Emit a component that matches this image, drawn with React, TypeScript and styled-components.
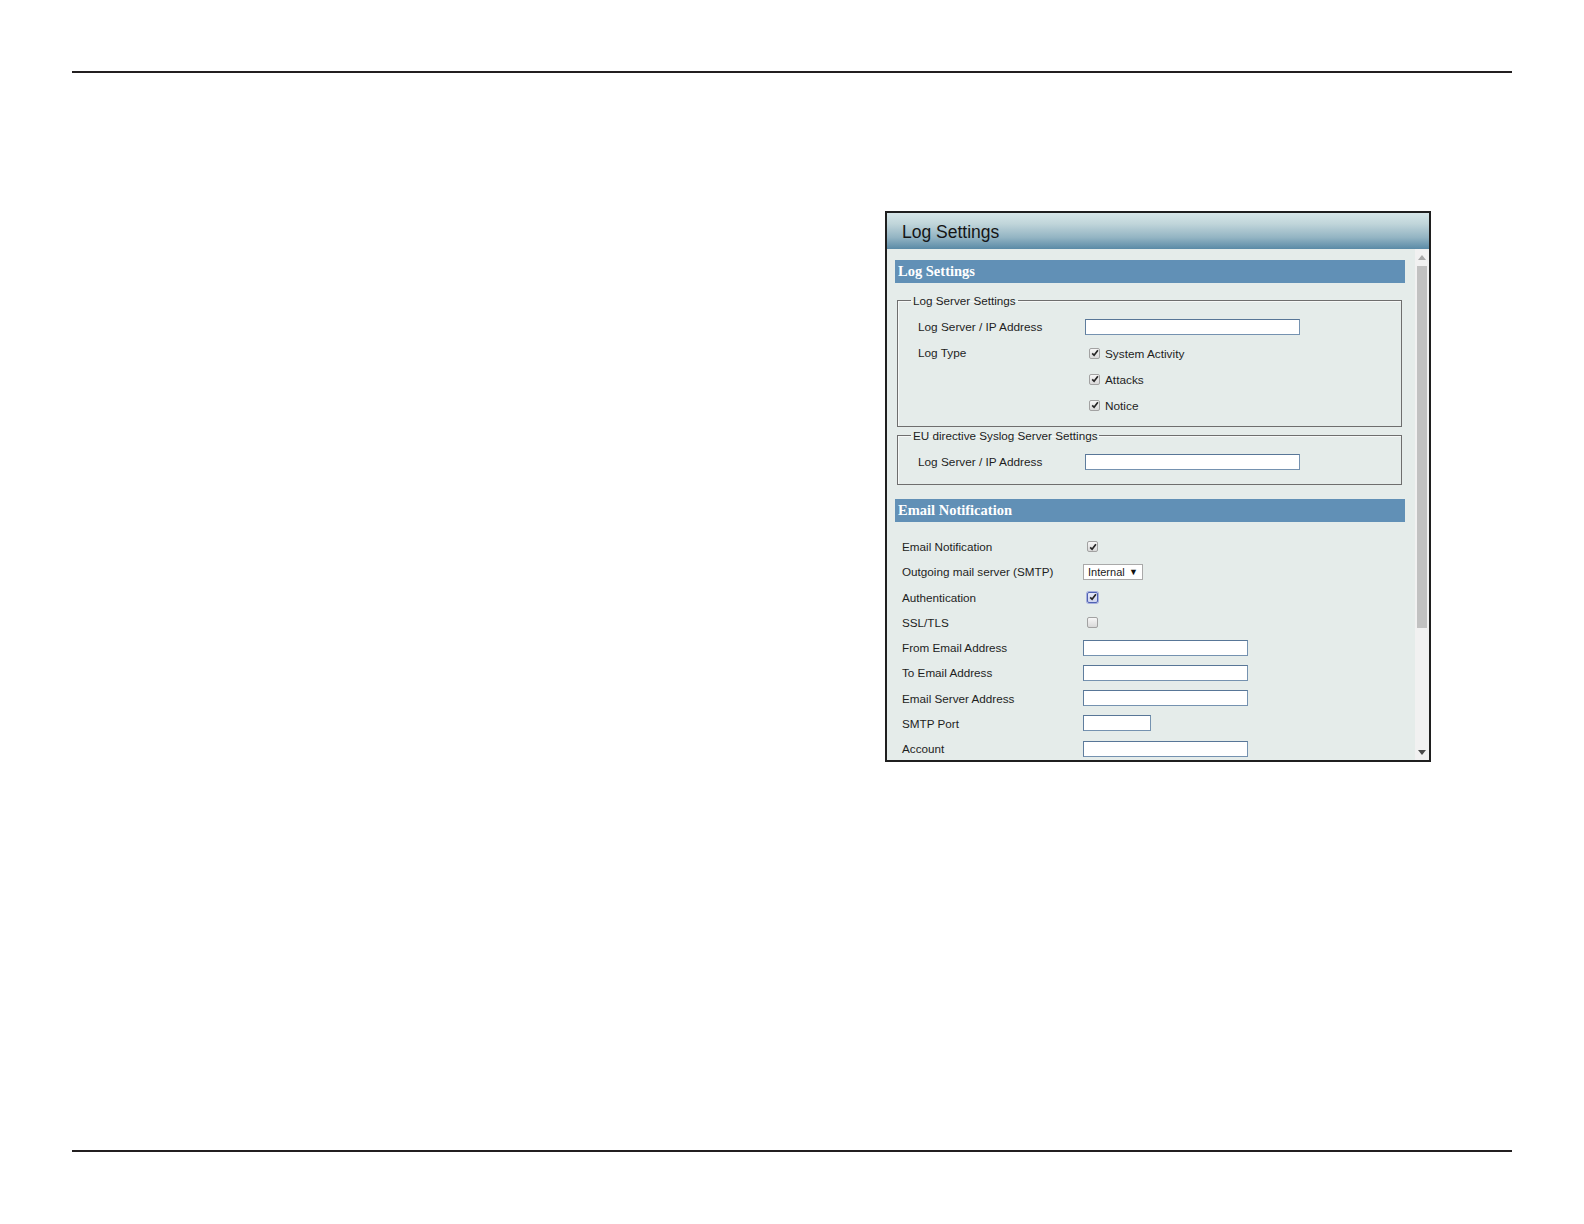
import * as React from 'react';
import styled, { createGlobalStyle } from 'styled-components';

const GlobalStyle = createGlobalStyle`
  body {
    margin: 0;
    background: #ffffff;
    font-family: "Liberation Sans", Arial, sans-serif;
  }
`;

interface CheckboxProps {
  checked?: boolean;
  focused?: boolean;
}

const Checkbox = ({ checked = false, focused = false }: CheckboxProps) => (
  <CheckBox $focused={focused}>
    {checked && (
      <svg width="8" height="8" viewBox="0 0 8 8">
        <path d="M1.2 4.3 L3.1 6.3 L6.9 1.2" fill="none" stroke="#262626" strokeWidth="1.7" />
      </svg>
    )}
  </CheckBox>
);

const Arrow = ({ up, color }: { up?: boolean; color: string }) => (
  <svg width="8" height="5" viewBox="0 0 8 5">
    <path d={up ? 'M0 5 L4 0 L8 5 Z' : 'M0 0 L8 0 L4 5 Z'} fill={color} />
  </svg>
);

const logTypes = ['System Activity', 'Attacks', 'Notice'];

export default function App() {
  return (
    <>
      <GlobalStyle />
      <Page>
        <Rule />
        <Stage>
          <Frame>
            <TitleBar>Log Settings</TitleBar>
            <Body>
              <Content>
                <SectionHeader $top={-1}>Log Settings</SectionHeader>

                <Group $top={11} $bottom={8}>
                  <Legend>Log Server Settings</Legend>
                  <FieldRow>
                    <FieldLabel>Log Server / IP Address</FieldLabel>
                    <Cell>
                      <TextInput $w={215} />
                    </Cell>
                  </FieldRow>
                  <FieldRow>
                    <FieldLabel>Log Type</FieldLabel>
                    <div>
                      {logTypes.map((t) => (
                        <CheckLine key={t}>
                          <Checkbox checked />
                          <CheckText>{t}</CheckText>
                        </CheckLine>
                      ))}
                    </div>
                  </FieldRow>
                </Group>

                <Group $top={2} $bottom={9}>
                  <Legend>EU directive Syslog Server Settings</Legend>
                  <FieldRow>
                    <FieldLabel>Log Server / IP Address</FieldLabel>
                    <Cell>
                      <TextInput $w={215} />
                    </Cell>
                  </FieldRow>
                </Group>

                <SectionHeader $top={14}>Email Notification</SectionHeader>

                <EmailList>
                  <EmailRow>
                    <EmailLabel>Email Notification</EmailLabel>
                    <EmailCheck>
                      <Checkbox checked />
                    </EmailCheck>
                  </EmailRow>
                  <EmailRow>
                    <EmailLabel>Outgoing mail server (SMTP)</EmailLabel>
                    <Select>
                      <span>Internal</span>
                      <SelectArrow>▼</SelectArrow>
                    </Select>
                  </EmailRow>
                  <EmailRow>
                    <EmailLabel>Authentication</EmailLabel>
                    <EmailCheck>
                      <Checkbox checked focused />
                    </EmailCheck>
                  </EmailRow>
                  <EmailRow>
                    <EmailLabel>SSL/TLS</EmailLabel>
                    <EmailCheck>
                      <Checkbox />
                    </EmailCheck>
                  </EmailRow>
                  <EmailRow>
                    <EmailLabel>From Email Address</EmailLabel>
                    <TextInput $w={165} />
                  </EmailRow>
                  <EmailRow>
                    <EmailLabel>To Email Address</EmailLabel>
                    <TextInput $w={165} />
                  </EmailRow>
                  <EmailRow>
                    <EmailLabel>Email Server Address</EmailLabel>
                    <TextInput $w={165} />
                  </EmailRow>
                  <EmailRow>
                    <EmailLabel>SMTP Port</EmailLabel>
                    <TextInput $w={68} />
                  </EmailRow>
                  <EmailRow>
                    <EmailLabel>Account</EmailLabel>
                    <TextInput $w={165} />
                  </EmailRow>
                </EmailList>
              </Content>

              <ScrollTrack>
                <ArrowZone>
                  <Arrow up color="#a8a8a8" />
                </ArrowZone>
                <Thumb />
                <TrackRest />
                <ArrowZone>
                  <Arrow color="#4a4a4a" />
                </ArrowZone>
              </ScrollTrack>
            </Body>
          </Frame>
        </Stage>
        <Rule />
      </Page>
    </>
  );
}

const Page = styled.div`
  width: 1584px;
  padding: 71px 72px 0;
  box-sizing: border-box;
`;

const Rule = styled.div`
  height: 2px;
  background: #231f20;
`;

const Stage = styled.div`
  height: 1077px;
  box-sizing: border-box;
  padding: 138px 0 0 813px;
`;

const Frame = styled.div`
  width: 546px;
  height: 551px;
  box-sizing: border-box;
  border: 2px solid #1f1f1f;
  display: flex;
  flex-direction: column;
`;

const TitleBar = styled.div`
  height: 36px;
  flex-shrink: 0;
  padding-left: 15px;
  line-height: 39px;
  font-size: 17.5px;
  color: #151515;
  background: linear-gradient(#d6e6e8 0%, #c0d5da 30%, #93b4c3 68%, #5a8aa6 100%);
`;

const Body = styled.div`
  flex: 1;
  display: flex;
  min-height: 0;
  overflow: hidden;
`;

const Content = styled.div`
  flex: 1;
  background: #e5ecea;
  padding: 12px 10px 0 8px;
  overflow: hidden;
`;

const SectionHeader = styled.div<{ $top?: number }>`
  margin-top: ${(p) => p.$top ?? 0}px;
  height: 23px;
  line-height: 22px;
  padding-left: 3px;
  background: #6190b6;
  color: #ffffff;
  font-family: "Liberation Serif", "Times New Roman", serif;
  font-weight: bold;
  font-size: 14.5px;
`;

const Group = styled.fieldset<{ $top: number; $bottom: number }>`
  margin: ${(p) => p.$top}px 3px 0 2px;
  padding: 7px 0 ${(p) => p.$bottom}px 0;
  border: 1px solid #6e6e6e;
  box-shadow: inset 1px 1px 0 #f6f8f7;
  min-width: 0;
`;

const Legend = styled.legend`
  margin-left: 13px;
  padding: 0 2px;
  font-size: 11.7px;
  line-height: 13px;
  color: #1c1c1c;
`;

const FieldRow = styled.div`
  display: grid;
  grid-template-columns: 167px 1fr;
  align-items: start;
  padding-left: 20px;
`;

const FieldLabel = styled.div`
  height: 26px;
  line-height: 26px;
  font-size: 11.8px;
  color: #1e1e1e;
`;

const Cell = styled.div`
  height: 26px;
  display: flex;
  align-items: center;
`;

const CheckLine = styled.div`
  height: 26px;
  display: flex;
  align-items: center;
  padding-left: 4px;
`;

const CheckText = styled.span`
  margin-left: 5px;
  font-size: 11.8px;
  color: #1e1e1e;
  position: relative;
  top: 1px;
`;

const CheckBox = styled.span<{ $focused: boolean }>`
  width: 11px;
  height: 11px;
  box-sizing: border-box;
  display: inline-flex;
  align-items: center;
  justify-content: center;
  border-radius: 2px;
  border: 1px solid ${(p) => (p.$focused ? '#4f62b3' : '#a2a2a2')};
  background: ${(p) =>
    p.$focused ? 'linear-gradient(#e6e9f8, #cfd5ef)' : 'linear-gradient(#f7f7f7, #d9d9d9)'};
  box-shadow: ${(p) => (p.$focused ? '0 0 0 1px #a7b0de' : 'none')};
`;

const TextInput = styled.input.attrs({ type: 'text' })<{ $w: number }>`
  width: ${(p) => p.$w}px;
  height: 16px;
  box-sizing: border-box;
  margin: 0;
  padding: 0 2px;
  border: 1px solid #7592b0;
  border-top-color: #587697;
  border-left-color: #5f7d9d;
  background: #ffffff;
  outline: none;
`;

const EmailList = styled.div`
  margin-top: 12px;
  padding-left: 7px;
`;

const EmailRow = styled.div`
  display: grid;
  grid-template-columns: 181px 1fr;
  align-items: center;
  height: 25.25px;
`;

const EmailLabel = styled.div`
  font-size: 11.7px;
  color: #1e1e1e;
`;

const EmailCheck = styled.div`
  display: flex;
  align-items: center;
  padding-left: 4px;
`;

const Select = styled.div`
  width: 60px;
  height: 16px;
  box-sizing: border-box;
  display: flex;
  align-items: center;
  justify-content: space-between;
  padding: 0 4px 0 4px;
  border: 1px solid #a9a9a9;
  background: #ffffff;
  font-size: 11px;
  color: #1a1a1a;
`;

const SelectArrow = styled.span`
  font-size: 9px;
  color: #111111;
`;

const ScrollTrack = styled.div`
  width: 14px;
  flex-shrink: 0;
  display: flex;
  flex-direction: column;
  background: #f1f1f1;
`;

const ArrowZone = styled.div`
  height: 16px;
  display: flex;
  align-items: center;
  justify-content: center;
  flex-shrink: 0;
`;

const Thumb = styled.div`
  height: 362px;
  margin: 1px 2px 0;
  background: #c1c1c1;
  flex-shrink: 0;
`;

const TrackRest = styled.div`
  flex: 1;
`;
